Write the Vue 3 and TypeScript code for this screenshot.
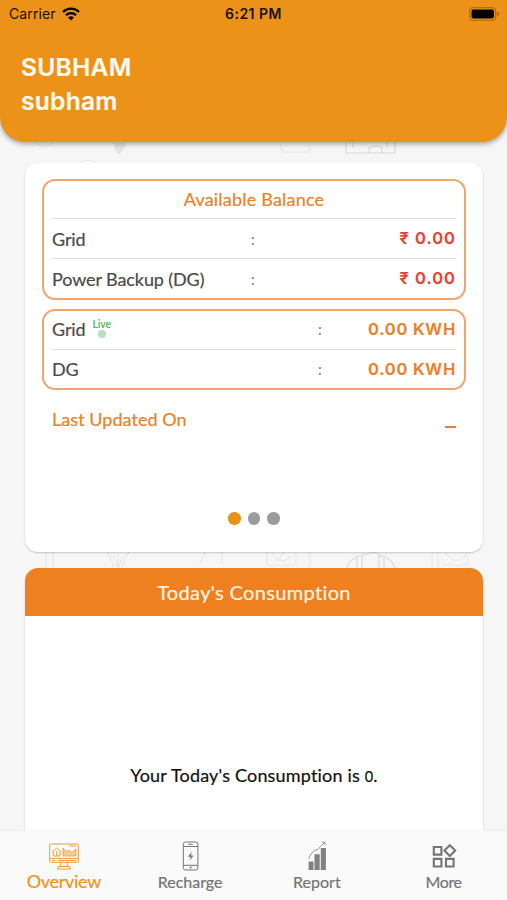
<script setup lang="ts">
interface Row { label: string; value: string; live?: boolean }
interface Tab { id: string; label: string }

const balances: Row[] = [
  { label: 'Grid', value: '₹ 0.00' },
  { label: 'Power Backup (DG)', value: '₹ 0.00' },
]
const readings: Row[] = [
  { label: 'Grid', value: '0.00 KWH', live: true },
  { label: 'DG', value: '0.00 KWH' },
]
const tabs: Tab[] = [
  { id: 'overview', label: 'Overview' },
  { id: 'recharge', label: 'Recharge' },
  { id: 'report', label: 'Report' },
  { id: 'more', label: 'More' },
]
const activeTab = 'overview'
const slides = [0, 1, 2]
const activeSlide = 0
</script>

<template>
  <div class="screen">
    <svg class="pattern" viewBox="0 0 507 900" fill="none" stroke="#e6e8e8" stroke-width="1.2" aria-hidden="true">
      <path d="M36 143q8 6 17 0" />
      <path d="M113 143h13l-3 7h-7zM116 151l3 3 3-3z" fill="#e2e3e3" />
      <path d="M281 143v5q1 4 5 4h20q4 0 4-4v-5" />
      <path d="M346 141v12h49v-12M353 141v7M369 153v-5q8-4 13 0v5M387 141v7" stroke="#d8dada" />
      <path d="M80 162q8-4 16 0" />
      <path d="M46 552v16M53 552v16M107 552q5 6 6 15M129 552q-5 6-6 15M113 556l5 12 5-12M118 552v16M200 563l5-10M222 552v13" />
      <path d="M267 552v13h29v-13M273 552a9 9 0 0 0 17 4M277 561l9-11M309 552q3 12 0 16" />
      <path d="M347 568q2-8 10-11M357 568v-12h5v12M361 556q14-7 20 0M379 568v-12h5v12M385 557q8 4 10 11" stroke="#d8dada" />
      <path d="M432 552v16M438 552v16M445 552q11 17 23 0M442 565h22q4-2 4-7" />
    </svg>

    <header class="header">
      <div class="status">
        <div class="carrier">
          <span>Carrier</span>
          <svg class="wifi" viewBox="0 0 18 14" fill="none" stroke="#000" stroke-width="2.3">
            <path d="M1 5a11.3 11.3 0 0 1 16 0M4 8.2a7 7 0 0 1 10 0" />
            <path d="M9 13.5 6.1 10.6a4.1 4.1 0 0 1 5.8 0z" fill="#000" stroke="none" />
          </svg>
        </div>
        <div class="time">6:21 PM</div>
        <svg class="battery" viewBox="0 0 31 14">
          <rect x=".7" y=".7" width="26" height="12.6" rx="3.6" fill="none" stroke="#a5680f" stroke-width="1.1" />
          <rect x="2.5" y="2.6" width="22.5" height="8.8" rx="1.8" />
          <path d="M28.3 4.8q3.2 2.2 0 4.4z" fill="#8e5a13" />
        </svg>
      </div>
      <div class="name">SUBHAM</div>
      <div class="name lower">subham</div>
    </header>

    <main class="content">
      <section class="card summary">
        <div class="box balance">
          <div class="box-title">Available Balance</div>
          <div v-for="row in balances" :key="row.label" class="row">
            <span class="label">{{ row.label }}</span>
            <span class="colon">:</span>
            <span class="value due">{{ row.value }}</span>
          </div>
        </div>
        <div class="box usage">
          <div v-for="row in readings" :key="row.label" class="row">
            <span class="label">{{ row.label }}
              <span v-if="row.live" class="live">Live<i class="pulse"></i></span>
            </span>
            <span class="colon">:</span>
            <span class="value">{{ row.value }}</span>
          </div>
        </div>
        <div class="updated">
          <span>Last Updated On</span>
          <span class="dash"></span>
        </div>
        <div class="dots">
          <span v-for="s in slides" :key="s" class="dot" :class="{ on: s === activeSlide }"></span>
        </div>
      </section>

      <section class="card consumption">
        <h2 class="card-head">Today's Consumption</h2>
        <p class="empty">Your Today's Consumption is <span class="zero">0</span>.</p>
      </section>
    </main>

    <nav class="tabs">
      <div v-for="tab in tabs" :key="tab.id" class="tab" :class="[tab.id, { active: tab.id === activeTab }]">
        <svg v-if="tab.id === 'overview'" class="icon" viewBox="0 0 30 30" fill="none" stroke="currentColor" stroke-width=".9">
          <rect x=".7" y="3" width="28.6" height="18.3" rx="1" />
          <path d="M.7 17.5h28.6M3 19.5h3M9 19.5h18M12 21.5l-1 4h8l-1-4M8.5 28v-1.3q0-1.2 1.5-1.2h10q1.5 0 1.5 1.2V28z" />
          <path d="M3 11.5 7.7 7l4.8 4.5M4.4 11v4h6.5v-4M7.7 10v5M20 5h7" />
          <path d="M14 15V7l3 3.5 3-1 3 2 4-3.5v7z" fill="currentColor" fill-opacity=".45" stroke-width=".7" />
        </svg>
        <svg v-else-if="tab.id === 'recharge'" class="icon" viewBox="0 0 30 30" fill="none" stroke="currentColor" stroke-width="1">
          <rect x="8.3" y="1" width="14.6" height="28" rx="2.2" />
          <path d="M8.5 5.5h14.4M8.5 24.3h14.4M13.3 3.3h4.4" />
          <circle cx="15.6" cy="26.6" r=".7" />
          <path d="m16.8 10.7-4 5h2.8l-1 4 4-5.2h-2.7z" fill="currentColor" stroke="none" />
        </svg>
        <svg v-else-if="tab.id === 'report'" class="icon" viewBox="0 0 30 30" opacity=".9">
          <path d="M6.6 20.5h4.9V29H6.6zM12.5 13.3h5.2V29h-5.2zM18.8 7h5.1v22h-5.1z" fill="currentColor" />
          <path d="M6.5 18q2-6 6-8.2 4.5-1 6-4.5l4.2-3.8M20 1.3h3v3" fill="none" stroke="currentColor" stroke-width=".8" />
        </svg>
        <svg v-else class="icon" viewBox="0 0 30 30" fill="none" stroke="currentColor" stroke-width="2.1">
          <path d="M4.8 6h7.6v7.6H4.8zM4.8 17.9h7.6v7.6H4.8zM17 17.9h7.6v7.6H17zM20.8 4.2l5.4 5.4-5.4 5.4-5.4-5.4z" />
        </svg>
        <span class="tab-label">{{ tab.label }}</span>
      </div>
    </nav>
  </div>
</template>

<style>
body { margin: 0; overflow: hidden; }
</style>

<style scoped>
.screen {
  position: relative;
  display: flex;
  flex-direction: column;
  width: 507px;
  height: 900px;
  overflow: hidden;
  background: #f6f6f6;
  font-family: Lato, "Open Sans", sans-serif;
  font-variant-ligatures: none;
  -webkit-text-stroke: .2px currentColor;
  color: #4b4b4d;
}
.screen * { box-sizing: border-box; }
.pattern { position: absolute; left: 0; top: 0; width: 507px; height: 900px; }
.header {
  position: relative;
  flex: none;
  height: 142px;
  border-radius: 0 0 25px 25px;
  background: #ed9219;
  box-shadow: 0 2px 5px rgba(0, 0, 0, .35);
  font-family: Inter, sans-serif;
}
.status {
  display: grid;
  grid-template-columns: 1fr auto 1fr;
  align-items: center;
  height: 27px;
  padding: 0 7px 0 9px;
  color: #17110a;
  font-size: 14px;
  -webkit-text-stroke: 0;
}
.carrier { display: flex; align-items: center; gap: 6px; letter-spacing: .1px; }
.wifi { width: 18px; height: 14px; }
.time { margin-right: 2px; font-weight: 600; letter-spacing: .5px; }
.battery { justify-self: end; width: 31px; height: 14px; }
.name {
  padding: 23px 0 0 21px;
  color: #fffaf0;
  font-size: 24.5px;
  font-weight: 600;
  line-height: 34px;
  letter-spacing: .3px;
}
.name.lower { padding-top: 0; }
.content {
  position: relative;
  flex: 1;
  min-height: 0;
  display: flex;
  flex-direction: column;
  gap: 16px;
  padding: 21px 24px 0 25px;
}
.card { background: #fff; box-shadow: 0 1px 2px rgba(0, 0, 0, .2); }
.summary {
  flex: none;
  display: flex;
  flex-direction: column;
  height: 389px;
  border-radius: 13px;
  padding: 16px 17px 0;
}
.box {
  flex: none;
  border: 2px solid #efa56d;
  border-radius: 13px;
  padding: 0 8px;
}
.balance { height: 121px; }
.usage { height: 81px; margin-top: 9px; }
.box-title {
  height: 37px;
  color: #e98225;
  font-size: 18px;
  line-height: 36px;
  letter-spacing: .2px;
  text-align: center;
}
.row {
  display: grid;
  grid-template-columns: 199px 1fr auto;
  align-items: center;
  height: 40px;
  border-top: 1px solid #dedede;
  font-size: 18px;
}
.usage .row { grid-template-columns: 266px 1fr auto; height: 40px; padding-bottom: 1px; }
.usage .row:first-child { height: 38px; padding-bottom: 2px; border-top: 0; }
.label { display: flex; align-items: center; white-space: nowrap; letter-spacing: -.1px; }
.colon { color: #777; font-size: 15px; -webkit-text-stroke: 0; }
.value {
  color: #e9812c;
  font-family: Inter, sans-serif;
  font-size: 16.5px;
  font-weight: 600;
  letter-spacing: .75px;
  line-height: 20px;
  padding-bottom: 1px;
}
.value.due { color: #e64336; letter-spacing: 1px; }
.live {
  display: flex;
  flex-direction: column;
  align-items: center;
  gap: 1px;
  margin-left: 7px;
  color: #4db656;
  font-size: 10.5px;
  line-height: 9px;
}
.pulse { width: 8px; height: 8px; border-radius: 50%; background: #b5dfc2; }
.updated {
  display: flex;
  justify-content: space-between;
  align-items: center;
  height: 24px;
  margin-top: 17px;
  padding: 0 10px;
  color: #e98225;
  font-size: 18px;
  letter-spacing: .05px;
}
.dash { width: 11px; height: 2px; margin-top: 15px; background: #e98225; }
.dots { display: flex; justify-content: center; gap: 7px; margin-top: 81px; }
.dot { width: 12.5px; height: 12.5px; border-radius: 50%; background: #9c9c9c; }
.dot.on { background: #e89218; }
.consumption { flex: none; height: 300px; border-radius: 13px 13px 0 0; }
.card-head {
  height: 48px;
  margin: 0;
  border-radius: 13px 13px 0 0;
  background: #ef801f;
  color: #fff6e8;
  font-size: 20px;
  font-weight: 400;
  line-height: 49px;
  letter-spacing: .35px;
  text-align: center;
}
.empty {
  margin: 147px 0 0;
  color: #111;
  font-size: 18px;
  line-height: 24px;
  letter-spacing: .18px;
  text-align: center;
}
.zero { font-size: 14.5px; }
.tabs {
  position: relative;
  flex: none;
  display: grid;
  grid-template-columns: repeat(4, 1fr);
  height: 69px;
  background: #fafafa;
  box-shadow: 0 -1px 1px rgba(0, 0, 0, .03);
}
.tab {
  display: flex;
  flex-direction: column;
  align-items: center;
  padding-top: 10px;
  color: #757575;
  font-size: 16px;
}
.tab.active { padding-left: 1px; color: #ec9320; font-size: 18px; letter-spacing: -.3px; }
.tab.more { letter-spacing: -.4px; }
.icon { width: 30px; height: 30px; }
.tab-label { line-height: 22px; }
.tab.active .tab-label { line-height: 20px; }
</style>
